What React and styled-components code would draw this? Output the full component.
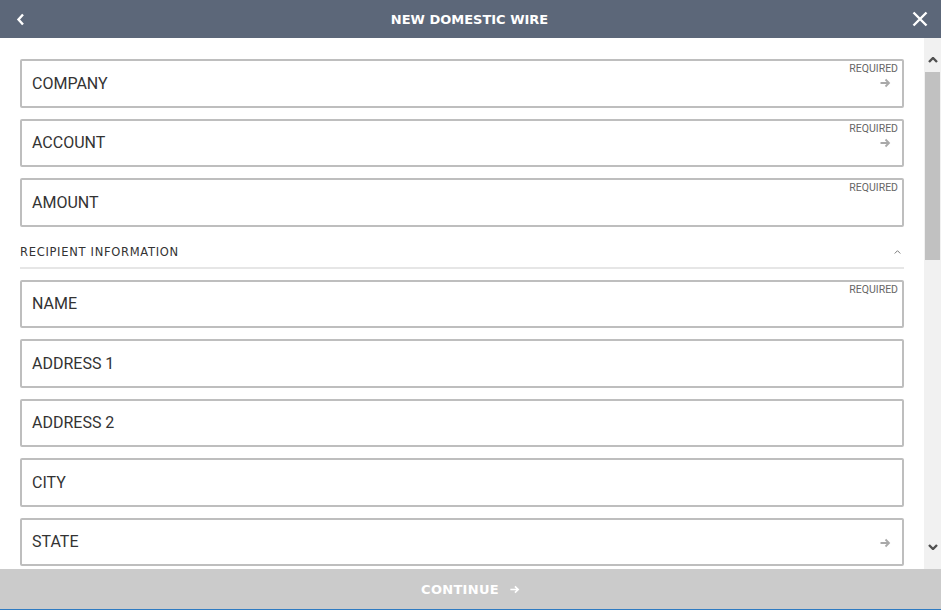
import React from "react";
import styled, { createGlobalStyle } from "styled-components";

const GlobalStyle = createGlobalStyle`
  html, body {
    margin: 0;
    padding: 0;
    background: #ffffff;
  }
  * {
    box-sizing: border-box;
  }
`;

const Page = styled.div`
  width: 941px;
  height: 610px;
  display: flex;
  flex-direction: column;
  background: #ffffff;
  font-family: Roboto, "Liberation Sans", sans-serif;
`;

const Header = styled.div`
  height: 38px;
  flex: none;
  background: #5c6779;
  display: flex;
  align-items: center;
  justify-content: space-between;
  padding: 0 13px 0 12px;
`;

const HeaderTitle = styled.div`
  color: #ffffff;
  font-family: "DejaVu Sans", sans-serif;
  font-weight: bold;
  font-size: 13px;
  padding-right: 1px;
`;

const IconButton = styled.div`
  width: 16px;
  height: 16px;
  display: flex;
  align-items: center;
  justify-content: center;
`;

const Body = styled.div`
  flex: 1;
  display: flex;
  min-height: 0;
`;

const Content = styled.div`
  flex: 1;
  overflow: hidden;
  padding: 21px 20px 0 20px;
  display: flex;
  flex-direction: column;
  gap: 11px;
`;

const Field = styled.div`
  height: 48.5px;
  flex: none;
  border: 2px solid #bebebe;
  border-radius: 2px;
  display: flex;
  align-items: center;
  justify-content: space-between;
  padding: 0 4px 0 10px;
`;

const FieldLabel = styled.div`
  font-size: 16px;
  color: #333333;
`;

const FieldSide = styled.div`
  align-self: stretch;
  display: flex;
  flex-direction: column;
  align-items: flex-end;
  padding-top: 2px;
  gap: 2px;
`;

const Required = styled.div`
  font-size: 10.5px;
  color: #666666;
  height: 12px;
  line-height: 12px;
`;

const Arrow = styled.div`
  width: 12px;
  height: 12px;
  margin-right: 7px;
  margin-top: ${(p) => (p.$alone ? "15px" : "0")};
  display: flex;
`;

const Section = styled.div`
  display: flex;
  align-items: center;
  justify-content: space-between;
  height: 31px;
  border-bottom: 2px solid #e6e6e6;
  flex: none;
`;

const SectionTitle = styled.div`
  font-family: "DejaVu Sans", sans-serif;
  font-size: 11.5px;
  letter-spacing: 0.7px;
  color: #333333;
`;

const Caret = styled.div`
  display: flex;
  margin-right: 3px;
`;

const ScrollTrack = styled.div`
  width: 17px;
  flex: none;
  background: #f1f1f1;
  display: flex;
  flex-direction: column;
`;

const ScrollButton = styled.div`
  height: 34px;
  display: flex;
  justify-content: center;
  align-items: ${(p) => (p.$down ? "flex-start" : "flex-end")};
  padding: ${(p) => (p.$down ? "9px 0 0" : "0 0 9px")};
`;

const ScrollRail = styled.div`
  flex: 1;
  display: flex;
  flex-direction: column;
`;

const ScrollThumb = styled.div`
  height: 188px;
  margin: 0 1px;
  background: #c1c1c1;
`;

const Footer = styled.div`
  height: 41px;
  flex: none;
  background: #cbcbcb;
  border-bottom: 1px solid #2f7bc2;
  display: flex;
  align-items: center;
  justify-content: center;
  gap: 10px;
  padding-left: 0;
`;

const FooterText = styled.div`
  color: #ffffff;
  font-family: "DejaVu Sans", sans-serif;
  font-weight: bold;
  font-size: 13px;
  letter-spacing: 0.3px;
`;

const ArrowIcon = ({ color = "#a9a9a9", size = 12 }) => (
  <svg width={size} height={size} viewBox="0 0 12 12">
    <path d="M1.5 6h8M6.5 2.5L10 6l-3.5 3.5" fill="none" stroke={color} strokeWidth="1.8" />
  </svg>
);

const Chevron = ({ down, size = 10, color = "#505050", width = 2.4 }) => (
  <svg width={size} height={size * 0.6} viewBox="0 0 10 6">
    <path d={down ? "M1 1l4 4 4-4" : "M1 5l4-4 4 4"} fill="none" stroke={color} strokeWidth={width} />
  </svg>
);

function FormField({ label, required, arrow }) {
  return (
    <Field>
      <FieldLabel>{label}</FieldLabel>
      <FieldSide>
        {required && <Required>REQUIRED</Required>}
        {arrow && (
          <Arrow $alone={!required}>
            <ArrowIcon />
          </Arrow>
        )}
      </FieldSide>
    </Field>
  );
}

export default function App() {
  return (
    <Page>
      <GlobalStyle />
      <Header>
        <IconButton>
          <svg width="9" height="13" viewBox="0 0 9 13">
            <path d="M7 1.5L2.5 6.5 7 11.5" fill="none" stroke="#fff" strokeWidth="2.4" />
          </svg>
        </IconButton>
        <HeaderTitle>NEW DOMESTIC WIRE</HeaderTitle>
        <IconButton>
          <svg width="16" height="16" viewBox="0 0 16 16">
            <path d="M1.5 1.5l13 13M14.5 1.5l-13 13" fill="none" stroke="#fff" strokeWidth="2.4" />
          </svg>
        </IconButton>
      </Header>
      <Body>
        <Content>
          <FormField label="COMPANY" required arrow />
          <FormField label="ACCOUNT" required arrow />
          <FormField label="AMOUNT" required />
          <Section>
            <SectionTitle>RECIPIENT INFORMATION</SectionTitle>
            <Caret>
              <Chevron size={7} color="#777" width={1.4} />
            </Caret>
          </Section>
          <FormField label="NAME" required />
          <FormField label="ADDRESS 1" />
          <FormField label="ADDRESS 2" />
          <FormField label="CITY" />
          <FormField label="STATE" arrow />
        </Content>
        <ScrollTrack>
          <ScrollButton>
            <Chevron />
          </ScrollButton>
          <ScrollRail>
            <ScrollThumb />
          </ScrollRail>
          <ScrollButton $down>
            <Chevron down />
          </ScrollButton>
        </ScrollTrack>
      </Body>
      <Footer>
        <FooterText>CONTINUE</FooterText>
        <ArrowIcon color="#ffffff" size={11} />
      </Footer>
    </Page>
  );
}
